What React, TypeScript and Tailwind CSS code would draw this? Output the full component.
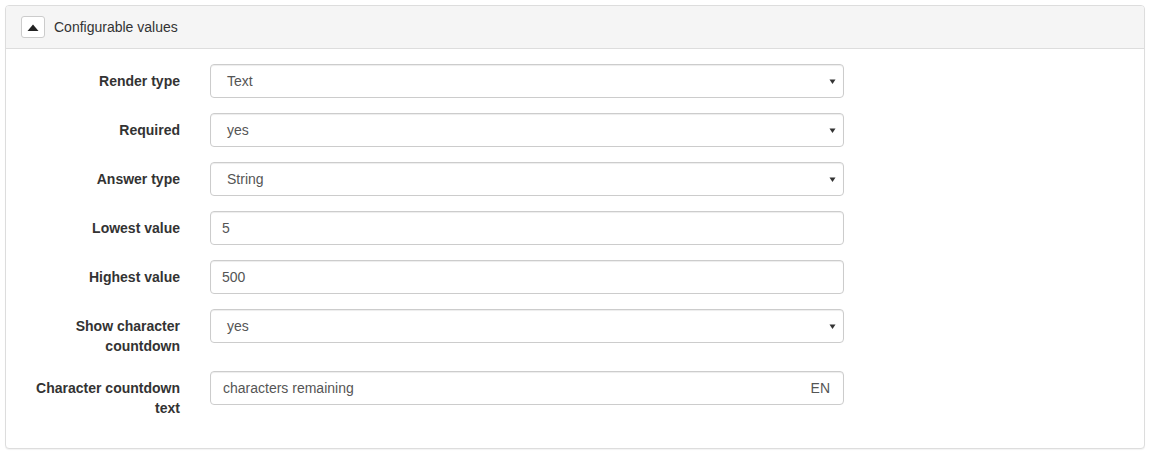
import React from 'react';

type Field = {
    label: string[];
    value: string;
    kind: 'select' | 'input' | 'lang';
};

const fields: Field[] = [
    { label: ['Render type'], value: 'Text', kind: 'select' },
    { label: ['Required'], value: 'yes', kind: 'select' },
    { label: ['Answer type'], value: 'String', kind: 'select' },
    { label: ['Lowest value'], value: '5', kind: 'input' },
    { label: ['Highest value'], value: '500', kind: 'input' },
    { label: ['Show character', 'countdown'], value: 'yes', kind: 'select' },
    { label: ['Character countdown', 'text'], value: 'characters remaining', kind: 'lang' },
];

const Control: React.FC<{ field: Field }> = ({ field }) => (
    <div className="flex h-[34px] w-[634px] items-center rounded-[4px] border border-[#ccc] bg-white text-[14px] text-[#555] shadow-[inset_0_1px_1px_rgba(0,0,0,0.075)]">
        {field.kind === 'select' && (
            <>
                <span className="flex-grow pl-[16px]">{field.value}</span>
                <svg className="mr-[7px] h-[7px] w-[7px]" viewBox="0 0 7 7">
                    <path d="M0.5 1.5h6L3.5 6z" fill="#333" />
                </svg>
            </>
        )}
        {field.kind === 'input' && <span className="pl-[11px]">{field.value}</span>}
        {field.kind === 'lang' && (
            <>
                <span className="flex-grow pl-[12px]">{field.value}</span>
                <span className="pr-[13px]">EN</span>
            </>
        )}
    </div>
);

export default function App() {
    return (
        <div className="min-h-screen bg-white p-[5px] font-['Liberation_Sans',Arial,sans-serif] text-[14px] leading-[20px] text-[#333]">
            <div className="overflow-hidden rounded-[4px] border border-[#ddd] bg-white shadow-[0_1px_1px_rgba(0,0,0,0.05)]">
                <header className="flex h-[43px] items-center gap-[9px] border-b border-[#ddd] bg-[#f5f5f5] px-[15px]">
                    <button className="flex h-[22px] w-[24px] items-center justify-center rounded-[3px] border border-[#ccc] bg-white">
                        <svg className="h-[7px] w-[12px]" viewBox="0 0 12 7">
                            <path d="M0.5 7L6 0.5 11.5 7z" fill="#222" />
                        </svg>
                    </button>
                    <span>Configurable values</span>
                </header>

                <main className="flex flex-col gap-[15px] px-[15px] pb-[30px] pt-[15px]">
                    {fields.map((field) => (
                        <div key={field.label.join(' ')} className="flex items-start">
                            <label className="w-[159px] pt-[7px] text-right font-bold">
                                {field.label.map((line) => (
                                    <div key={line}>{line}</div>
                                ))}
                            </label>
                            <div className="pl-[30px]">
                                <Control field={field} />
                            </div>
                        </div>
                    ))}
                </main>
            </div>
        </div>
    );
}
